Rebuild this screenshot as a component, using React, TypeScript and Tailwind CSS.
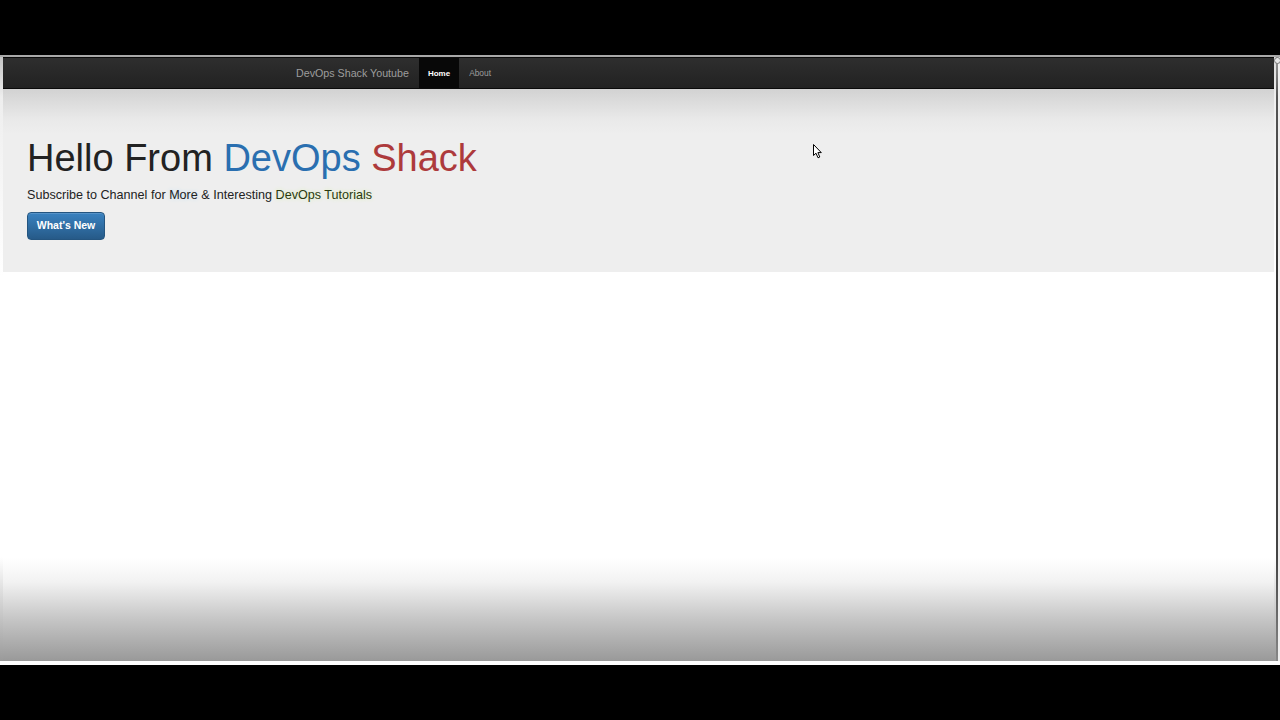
import React from 'react';

const font = "font-['Liberation_Sans',Arial,sans-serif]";

function Navbar() {
  return (
    <nav className="flex h-[32px] items-stretch border-t border-b border-[#0a0a0a] bg-[linear-gradient(to_bottom,#2e2e2e,#222222)]">
      <div className="w-[289px]" />
      <a className="flex items-center px-[4px] pt-[1px] text-[10.7px] text-[#9d9d9d]">DevOps Shack Youtube</a>
      <ul className="ml-[6px] flex items-stretch">
        <li className="flex items-center bg-[#080808] px-[9px] pt-[1px] text-[8px] font-bold text-white">Home</li>
        <li className="flex items-center px-[10px] pt-[1px] text-[8.4px] text-[#9d9d9d]">About</li>
      </ul>
    </nav>
  );
}

function Jumbotron() {
  return (
    <section className="h-[183px] bg-[linear-gradient(to_bottom,#d2d2d2,#e9e9e9_30px,#eeeeee_45px,#eeeeee)] pl-[24px] pt-[50px]">
      {/* Heading */}
      <h1 className="text-[38px] leading-none text-[#222]">
        Hello From <span className="text-[#2a6fb0]">DevOps</span>{' '}
        <span className="text-[#ad3a3c]">Shack</span>
      </h1>
      <p className="mt-[12px] text-[12.6px] leading-none text-[#222]">
        Subscribe to Channel for{' '}
        <span className="[text-shadow:0_0_4px_#bfe0f5]">More</span> & Interesting{' '}
        <span className="text-[#2b3a10] [text-shadow:0_0_4px_#d9f0b0]">DevOps Tutorials</span>
      </p>
      <button className="mt-[10px] h-[28px] w-[78px] rounded-[4px] border border-[#245580] bg-[linear-gradient(to_bottom,#3a82c0,#265a88)] text-[10.5px] font-bold text-white shadow-[inset_0_1px_0_rgba(255,255,255,0.15)]">
        What's New
      </button>
    </section>
  );
}

function Cursor() {
  return (
    <svg className="absolute left-[813px] top-[144px]" width="10" height="15" viewBox="0 0 10 15">
      <path d="M0.5 0.5 L0.5 11.5 L3 9.2 L5 13.8 L6.8 13 L4.9 8.6 L8.3 8.6 Z" fill="#fff" stroke="#000" strokeWidth="1" strokeLinejoin="round" />
    </svg>
  );
}

export default function App() {
  return (
    <div className={`relative flex h-[720px] w-[1280px] flex-col overflow-hidden bg-black ${font}`}>
      <div className="h-[55px] bg-black" />
      <div className="flex h-[610px] flex-col">
        <div className="h-[2px] bg-[#a8a8a8]" />
        <div className="flex flex-1">
          {/* left frame */}
          <div className="w-[3px] bg-[linear-gradient(to_bottom,#c4c4c4,#eeeeee_40px,#ffffff_220px,#ffffff_500px,#9a9a9a)]" />
          <div className="flex flex-1 flex-col">
            <Navbar />
            <Jumbotron />
            <div className="flex-1 bg-[linear-gradient(to_bottom,#ffffff,#ffffff_286px,#f2f2f2_310px,#c8c8c8_345px,#999999)]" />
          </div>
          {/* right frame */}
          <div className="relative flex w-[6px]">
            <div className="w-[2px] bg-[linear-gradient(to_bottom,#d8d8d8,#eeeeee_40px,#ffffff_220px,#ffffff_500px,#9a9a9a)]" />
            <div className="w-[2px] bg-[linear-gradient(to_bottom,#9a9a9a,#555555_40px,#333333_220px,#444444_500px,#888888)]" />
            <div className="w-[2px] bg-[#eeeeee]" />
            <div className="absolute left-[0px] top-[0px] h-[7px] w-[7px] rounded-full border border-[#777] bg-[#e6e6e6]" />
          </div>
        </div>
        <div className="h-[4px] bg-white" />
      </div>
      <div className="flex-1 bg-black" />
      <Cursor />
    </div>
  );
}
